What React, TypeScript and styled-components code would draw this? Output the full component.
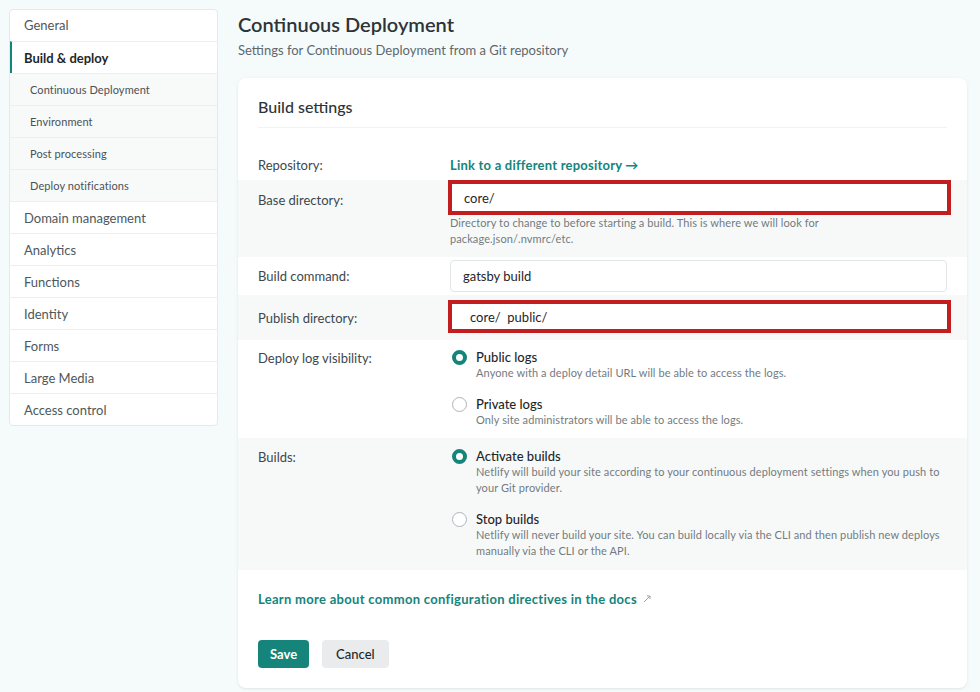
import React from "react";
import styled, { createGlobalStyle } from "styled-components";

const Global = createGlobalStyle`
  html, body { margin: 0; padding: 0; background: #f5fbfb; }
  body { font-family: Lato, "Noto Sans", sans-serif; color: #2e3539; }
  * { box-sizing: border-box; }
`;

const TEAL = "#15847b";

const Page = styled.div`
  display: flex;
  align-items: flex-start;
  gap: 20px;
  padding: 9px 13px 0 9px;
  min-height: 692px;
`;

const Sidebar = styled.nav`
  width: 209px;
  flex-shrink: 0;
  background: #fff;
  border: 1px solid #e6eaeb;
  border-radius: 4px;
  overflow: hidden;
`;

const NavItem = styled.div<{ $active?: boolean }>`
  height: 32px;
  display: flex;
  align-items: center;
  padding-left: ${(p) => (p.$active ? "12px" : "14px")};
  border-top: 1px solid #eceff0;
  border-left: ${(p) => (p.$active ? `2px solid ${TEAL}` : "none")};
  font-size: 13px;
  font-weight: ${(p) => (p.$active ? 700 : 400)};
  color: ${(p) => (p.$active ? "#1f2629" : "#4e575c")};
  &:first-child { border-top: none; height: 31px; padding-bottom: 1px; }
`;

const SubItem = styled.div`
  height: 32px;
  display: flex;
  align-items: center;
  padding-left: 20px;
  border-top: 1px solid #eceff0;
  background: #f8f9f9;
  font-size: 11px;
  letter-spacing: 0.1px;
  color: #4a5257;
`;

const Main = styled.main`
  flex: 1;
  min-width: 0;
`;

const Heading = styled.h1`
  margin: 0;
  padding-top: 2px;
  font-size: 20px;
  line-height: 26px;
  font-weight: 600;
  color: #2e3338;
`;

const Subtitle = styled.p`
  margin: 4px 0 0;
  font-size: 13px;
  line-height: 18px;
  color: #5f676c;
`;

const Card = styled.section`
  margin-top: 19px;
  background: #fff;
  border-radius: 8px;
  box-shadow: 0 1px 3px rgba(40, 70, 80, 0.12);
  padding: 17px 0 20px;
`;

const CardTitle = styled.h2`
  margin: 0 20px;
  padding-bottom: 8px;
  border-bottom: 1px solid #f0f2f3;
  font-size: 16px;
  line-height: 24px;
  font-weight: 500;
  color: #2e3338;
`;

const Rows = styled.div`
  margin-top: 22px;
`;

const Row = styled.div<{ $shade?: boolean; $pt: number; $pb: number }>`
  display: grid;
  grid-template-columns: 192px 1fr;
  padding: ${(p) => `${p.$pt}px 20px ${p.$pb}px`};
  background: ${(p) => (p.$shade ? "#f7f9f9" : "#fff")};
`;

const Label = styled.div<{ $pt?: number }>`
  font-size: 13px;
  line-height: 20px;
  color: #3e474c;
  padding-top: ${(p) => p.$pt ?? 0}px;
`;

const Value = styled.div`
  display: flex;
  flex-direction: column;
`;

const TextLink = styled.a`
  font-size: 13px;
  line-height: 20px;
  font-weight: 700;
  letter-spacing: 0.22px;
  color: ${TEAL};
  text-decoration: none;
`;

const Input = styled.div<{ $flag?: boolean; $h: number; $indent?: number }>`
  height: ${(p) => p.$h}px;
  margin: ${(p) => (p.$flag ? "0 -4px 0 -2px" : "0")};
  border: ${(p) => (p.$flag ? "4px solid #c21d1f" : "1px solid #e3e6e7")};
  border-radius: ${(p) => (p.$flag ? "0" : "4px")};
  background: #fff;
  display: flex;
  align-items: center;
  padding-left: ${(p) => p.$indent ?? 12}px;
  font-size: 13px;
  color: #1f2629;
`;

const Help = styled.div`
  font-size: 11px;
  line-height: 16px;
  letter-spacing: 0.1px;
  color: #737b80;
  padding-right: 120px;
`;

const RadioList = styled.div`
  display: flex;
  flex-direction: column;
  gap: 14px;
`;

const RadioItem = styled.div`
  display: grid;
  grid-template-columns: 26px 1fr;
`;

const RadioDot = styled.span<{ $on?: boolean }>`
  width: 15px;
  height: 15px;
  margin-top: 2px;
  margin-left: 2px;
  border-radius: 50%;
  border: ${(p) => (p.$on ? `4px solid ${TEAL}` : "1px solid #aeb4b7")};
  background: #fff;
`;

const RadioTitle = styled.div`
  font-size: 13px;
  line-height: 18px;
  font-weight: 500;
  color: #1f2629;
`;

const RadioDesc = styled.div`
  margin-top: -1px;
  font-size: 11px;
  line-height: 16px;
  letter-spacing: 0.1px;
  color: #737b80;
`;

const DocsLink = styled.a`
  display: flex;
  align-items: center;
  gap: 6px;
  margin: 21px 20px 0;
  font-size: 13px;
  line-height: 16px;
  font-weight: 700;
  letter-spacing: 0.3px;
  color: ${TEAL};
  text-decoration: none;
`;

const Actions = styled.div`
  display: flex;
  gap: 13px;
  margin: 33px 20px 0;
`;

const Button = styled.button<{ $primary?: boolean }>`
  height: 28px;
  padding: 0 ${(p) => (p.$primary ? "12px" : "14px")};
  border: none;
  border-radius: 4px;
  font-family: inherit;
  font-size: 13px;
  font-weight: ${(p) => (p.$primary ? 700 : 500)};
  background: ${(p) => (p.$primary ? TEAL : "#e9ebed")};
  color: ${(p) => (p.$primary ? "#fff" : "#1f2629")};
`;

const Radio = ({ on, title, desc }: { on?: boolean; title: string; desc: string }) => (
  <RadioItem>
    <RadioDot $on={on} />
    <div>
      <RadioTitle>{title}</RadioTitle>
      <RadioDesc>{desc}</RadioDesc>
    </div>
  </RadioItem>
);

export default function App() {
  return (
    <>
      <Global />
      <Page>
        <Sidebar>
          <NavItem>General</NavItem>
          <NavItem $active>Build &amp; deploy</NavItem>
          <SubItem>Continuous Deployment</SubItem>
          <SubItem>Environment</SubItem>
          <SubItem>Post processing</SubItem>
          <SubItem>Deploy notifications</SubItem>
          <NavItem>Domain management</NavItem>
          <NavItem>Analytics</NavItem>
          <NavItem>Functions</NavItem>
          <NavItem>Identity</NavItem>
          <NavItem>Forms</NavItem>
          <NavItem>Large Media</NavItem>
          <NavItem>Access control</NavItem>
        </Sidebar>
        <Main>
          <Heading>Continuous Deployment</Heading>
          <Subtitle>Settings for Continuous Deployment from a Git repository</Subtitle>
          <Card>
            <CardTitle>Build settings</CardTitle>
            <Rows>
              <Row $pt={5} $pb={5}>
                <Label>Repository:</Label>
                <Value>
                  <TextLink>Link to a different repository →</TextLink>
                </Value>
              </Row>
              <Row $shade $pt={0} $pb={10}>
                <Label $pt={10}>Base directory:</Label>
                <Value>
                  <Input $flag $h={35}>core/</Input>
                  <Help>
                    Directory to change to before starting a build. This is where we will look for
                    package.json/.nvmrc/etc.
                  </Help>
                </Value>
              </Row>
              <Row $pt={3} $pb={3}>
                <Label $pt={6}>Build command:</Label>
                <Value>
                  <Input $h={32}>gatsby build</Input>
                </Value>
              </Row>
              <Row $shade $pt={5} $pb={7}>
                <Label $pt={8}>Publish directory:</Label>
                <Value>
                  <Input $flag $h={33} $indent={18}>core/&nbsp; public/</Input>
                </Value>
              </Row>
              <Row $pt={8} $pb={10}>
                <Label>Deploy log visibility:</Label>
                <RadioList>
                  <Radio
                    on
                    title="Public logs"
                    desc="Anyone with a deploy detail URL will be able to access the logs."
                  />
                  <Radio
                    title="Private logs"
                    desc="Only site administrators will be able to access the logs."
                  />
                </RadioList>
              </Row>
              <Row $shade $pt={9} $pb={11}>
                <Label>Builds:</Label>
                <RadioList>
                  <Radio
                    on
                    title="Activate builds"
                    desc="Netlify will build your site according to your continuous deployment settings when you push to your Git provider."
                  />
                  <Radio
                    title="Stop builds"
                    desc="Netlify will never build your site. You can build locally via the CLI and then publish new deploys manually via the CLI or the API."
                  />
                </RadioList>
              </Row>
            </Rows>
            <DocsLink>
              Learn more about common configuration directives in the docs
              <svg width="8" height="8" viewBox="0 0 8 8">
                <path d="M1 7 L7 1 M4 1 H7 V4" stroke="#9aa3a7" strokeWidth="1" fill="none" />
              </svg>
            </DocsLink>
            <Actions>
              <Button $primary>Save</Button>
              <Button>Cancel</Button>
            </Actions>
          </Card>
        </Main>
      </Page>
    </>
  );
}
